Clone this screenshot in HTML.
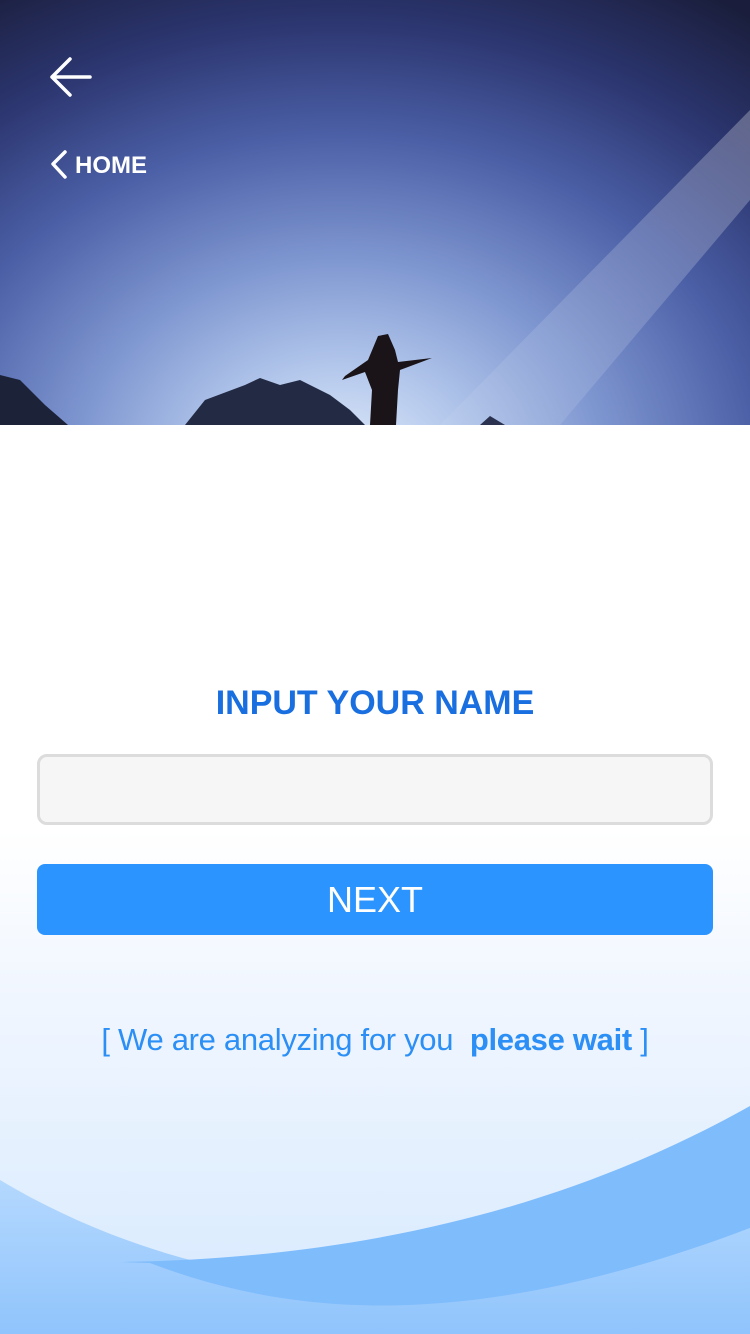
<!DOCTYPE html>
<html><head><meta charset="utf-8"><style>
*{margin:0;padding:0;box-sizing:border-box}
body{width:750px;height:1334px;position:relative;overflow:hidden;font-family:"Liberation Sans",sans-serif;background:linear-gradient(#fff 0,#fff 830px,#f0f6ff 1000px,#dcecfe 1260px)}
.hero{position:absolute;left:0;top:0;width:750px;height:425px;background:radial-gradient(ellipse 700px 560px at 340px 470px,#e6effc 0%,#b4c8ec 18%,#7e96d0 38%,#4b5fa6 60%,#2c3670 80%,#1a1e3c 100%)}
.title{position:absolute;top:684px;width:750px;text-align:center;color:#1a6fe0;font-weight:bold;font-size:34px}
.inp{position:absolute;left:37px;top:754px;width:676px;height:71px;border:3px solid #dcdcdc;border-radius:10px;background:#f6f6f6}
.btn{position:absolute;left:37px;top:864px;width:676px;height:71px;border-radius:8px;background:#2c94fe;color:#fff;font-size:36px;text-align:center;line-height:71px}
.wait{position:absolute;top:1022px;width:750px;text-align:center;color:#2b8ff5;font-size:31px;font-family:"Liberation Sans",sans-serif;letter-spacing:-0.3px}
</style></head><body>
<div class="hero">
<svg width="750" height="425" style="position:absolute;left:0;top:0">
<defs><linearGradient id="r" x1="1" y1="0" x2="0" y2="1"><stop offset="0" stop-color="#fff" stop-opacity=".55"/><stop offset="1" stop-color="#fff" stop-opacity=".1"/></linearGradient></defs>
<polygon points="750,110 750,200 560,425 440,425" fill="url(#r)" opacity=".5"/>
<path d="M0,375 L20,380 L45,405 L68,425 L0,425Z" fill="#1c2238"/>
<path d="M185,425 L205,400 L245,385 L260,378 L280,385 L300,380 L330,395 L350,410 L365,425Z" fill="#232a44"/>
<path d="M480,425 L490,416 L505,425Z" fill="#2a3250"/>
<path d="M370,425 L372,390 L365,372 L342,380 L345,376 L368,360 L378,336 L388,334 L395,350 L398,362 L432,358 L400,370 L398,390 L396,425Z" fill="#1a1418"/>
<path d="M52,77 H90 M70,59 L52,77 L70,95" stroke="#fff" stroke-width="3.5" fill="none" stroke-linecap="round" stroke-linejoin="round"/>
<path d="M65,152 L53,164 L65,177" stroke="#fff" stroke-width="3.5" fill="none" stroke-linecap="round" stroke-linejoin="round"/>
<text x="75" y="173" fill="#fff" font-family="Liberation Sans" font-weight="bold" font-size="24">HOME</text>
</svg></div>
<div class="title">INPUT YOUR NAME</div>
<div class="inp"></div>
<div class="btn">NEXT</div>
<div class="wait"><span style="font-weight:normal">[</span> We are analyzing for you &nbsp;<b>please wait</b> ]</div>
<svg width="750" height="334" style="position:absolute;left:0;top:1000px">
<defs><linearGradient id="a" x1="0" y1="0" x2="0" y2="1"><stop offset="0" stop-color="#b4d8fe"/><stop offset="1" stop-color="#90c4fc"/></linearGradient></defs>
<path d="M0,180 C200,300 480,330 750,228 L750,334 L0,334Z" fill="url(#a)"/>
<path d="M120,262 C400,258 600,190 750,106 L750,228 C480,330 300,320 150,263Z" fill="#7fbcfc"/>
</svg>
</body></html>
